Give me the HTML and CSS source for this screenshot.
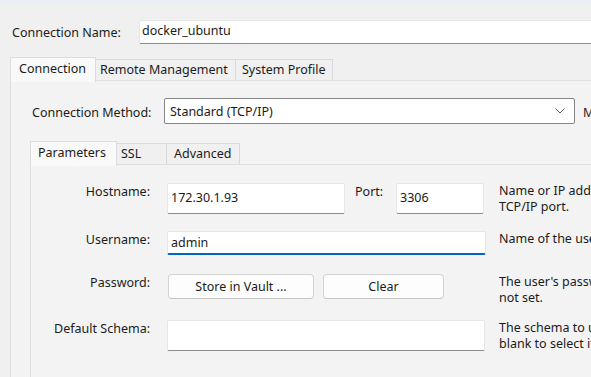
FILE: index.html
```html
<!DOCTYPE html>
<html>
<head>
<meta charset="utf-8">
<link rel="stylesheet" href="styles.css">
</head>
<body>
<div class="band"></div>
<div class="name-row">
  <span class="name-label">Connection Name:</span>
  <div class="textbox name-box">docker_ubuntu</div>
</div>
<div class="tabs outer-tabs">
  <div class="tab active t-conn">Connection</div>
  <div class="tab t-remote">Remote Management</div>
  <div class="tab t-sys">System Profile</div>
</div>
<div class="pane outer-pane">
  <div class="method-row">
    <span class="method-label">Connection Method:</span>
    <div class="select">
      <span>Standard (TCP/IP)</span>
      <svg class="chev" width="10" height="6" viewBox="0 0 10 6"><path d="M0.5 0.5 L5 5 L9.5 0.5" fill="none" stroke="#5a5a5a" stroke-width="1"/></svg>
    </div>
    <span class="method-m">M</span>
  </div>
  <div class="tabs inner-tabs">
    <div class="tab active t-par">Parameters</div>
    <div class="tab t-ssl">SSL</div>
    <div class="tab t-adv">Advanced</div>
  </div>
  <div class="pane inner-pane">
    <div class="grid">
      <div class="lbl">Hostname:</div>
      <div class="field host-field">
        <div class="textbox host-box">172.30.1.93</div>
        <span class="port-label">Port:</span>
        <div class="textbox port-box">3306</div>
      </div>
      <div class="desc">Name or IP address of the server host - and<br>TCP/IP port.</div>

      <div class="lbl">Username:</div>
      <div class="field">
        <div class="textbox user-box">admin</div>
      </div>
      <div class="desc">Name of the user to connect with.</div>

      <div class="lbl">Password:</div>
      <div class="field btn-field">
        <div class="btn vault">Store in Vault ...</div>
        <div class="btn clear">Clear</div>
      </div>
      <div class="desc">The user's password. Will be requested later if it's<br>not set.</div>

      <div class="lbl">Default Schema:</div>
      <div class="field">
        <div class="textbox schema-box"></div>
      </div>
      <div class="desc">The schema to use as default schema. Leave<br>blank to select it later.</div>
    </div>
  </div>
</div>
</body>
</html>
```

FILE: styles.css
```css
html, body {
  margin: 0;
  padding: 0;
  width: 591px;
  height: 377px;
  overflow: hidden;
  background: #f0f0f0;
  font-family: "Noto Sans", "Segoe UI", sans-serif;
  font-size: 12.5px;
  color: #1b1b1b;
}

.band {
  height: 4px;
  background: #eceff5;
}

.name-row {
  display: flex;
  align-items: center;
  margin-top: 16px;
  padding-left: 12px;
  white-space: nowrap;
}

.name-label {
  flex: 0 0 127px;
}

.textbox {
  box-sizing: border-box;
  background: #ffffff;
  border: 1px solid #e6e6e6;
  border-bottom-color: #8c8c8c;
  border-radius: 2px;
  padding-left: 3px;
  white-space: nowrap;
  flex-shrink: 0;
}

.name-box {
  flex: 0 0 470px;
  height: 24px;
  line-height: 20px;
  padding-left: 2px;
}

.outer-tabs {
  margin-top: 13px;
  margin-left: 10px;
}

.tabs {
  display: flex;
  align-items: flex-end;
  white-space: nowrap;
  position: relative;
  z-index: 1;
}

.tab {
  box-sizing: border-box;
  flex-shrink: 0;
  height: 21px;
  line-height: 19px;
  border: 1px solid #dadada;
  border-bottom: none;
  background: #f0f0f0;
  padding: 0 6px;
}

.tab + .tab {
  border-left: none;
}

.tab.active {
  height: 25px;
  background: #f9f9f9;
  border-color: #dcdcdc;
  margin-bottom: -2px;
  line-height: 21px;
}

.t-conn { width: 86px; padding-left: 8px; }
.t-remote { width: 140px; padding-left: 4px; }
.t-sys { width: 97px; padding-left: 6px; }

.pane {
  border-top: 1px solid #dfdfdf;
  border-left: 1px solid #dfdfdf;
  background: #f3f3f3;
}

.outer-pane {
  margin-left: 10px;
  height: 300px;
  padding-top: 17px;
  box-sizing: border-box;
}

.method-row {
  display: flex;
  align-items: center;
  white-space: nowrap;
}

.method-label {
  flex: 0 0 153px;
  padding-left: 21px;
  box-sizing: border-box;
  margin-top: 3px;
}

.select {
  box-sizing: border-box;
  flex: 0 0 411px;
  height: 26px;
  background: #ffffff;
  border: 1px solid #858585;
  border-radius: 2px;
  display: flex;
  align-items: center;
  justify-content: space-between;
  padding: 0 9px 0 5px;
}

.chev {
  display: block;
}

.method-m {
  margin-left: 8px;
  margin-top: 2px;
}

.inner-tabs {
  margin-top: 17px;
  margin-left: 19px;
}

.t-par { width: 87px; padding-left: 7px; }
.t-ssl { width: 50px; padding-left: 4px; }
.t-adv { width: 73px; padding-left: 7px; }

.inner-pane {
  margin-left: 19px;
  height: 220px;
  padding-top: 18px;
  box-sizing: border-box;
  background: #f3f3f3;
}

.grid {
  display: grid;
  grid-template-columns: 119px 336px 300px;
  white-space: nowrap;
}

.lbl {
  text-align: right;
  padding-top: 1px;
  line-height: 16px;
}

.field {
  display: flex;
  align-items: flex-start;
  padding-left: 17px;
}

.desc {
  padding-left: 13px;
  line-height: 16px;
  padding-top: 0;
}

.host-field { height: 31px; margin-bottom: 17px; }
.host-box { width: 178px; height: 31px; line-height: 28px; }
.port-label { margin-left: 10px; width: 41px; line-height: 16px; padding-top: 1px; flex-shrink: 0; }
.port-box { width: 88px; height: 31px; line-height: 28px; }

.user-box {
  width: 319px;
  height: 24px;
  line-height: 21px;
  border-bottom: 2px solid #0067c0;
  margin-bottom: 19px;
}

.btn-field { margin-bottom: 21px; }

.btn {
  box-sizing: border-box;
  flex-shrink: 0;
  height: 25px;
  line-height: 24px;
  text-align: center;
  background: #fdfdfd;
  border: 1px solid #d3d3d3;
  border-bottom-color: #c4c4c4;
  border-radius: 4px;
}

.vault { width: 146px; margin-left: 1px; }
.clear { width: 121px; margin-left: 9px; }

.schema-box {
  width: 318px;
  height: 31px;
}
```
